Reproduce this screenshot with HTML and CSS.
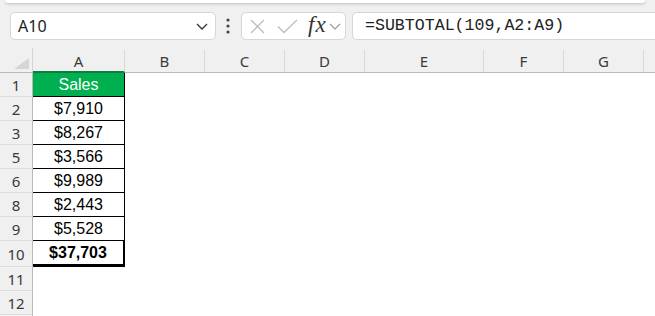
FILE: index.html
```html
<!DOCTYPE html>
<html lang="en">
<head>
    <meta charset="UTF-8">
    <title>SUBTOTAL</title>
    <link rel="stylesheet" href="styles.css">
</head>
<body>

<div class="top">
    <div class="ribbon-edge"></div>
    <div class="formula-bar">
        <div class="name-box">
            <span>A10</span>
            <svg width="12" height="7" viewBox="0 0 12 7"><path d="M1 1 L6 6 L11 1" fill="none" stroke="#333" stroke-width="1.3"/></svg>
        </div>
        <svg class="dots" width="4" height="16" viewBox="0 0 4 16"><circle cx="2" cy="2" r="1.6" fill="#444"/><circle cx="2" cy="8" r="1.6" fill="#444"/><circle cx="2" cy="14" r="1.6" fill="#444"/></svg>
        <div class="fx-group">
            <svg width="15" height="15" viewBox="0 0 15 15"><path d="M1 1 L14 14 M14 1 L1 14" stroke="#bdbdbd" stroke-width="1.3" fill="none"/></svg>
            <svg width="21" height="15" viewBox="0 0 21 15"><path d="M1 7.5 L7 13.5 L20 1" stroke="#bdbdbd" stroke-width="1.3" fill="none"/></svg>
            <span class="fx">fx</span>
            <svg width="12" height="7" viewBox="0 0 12 7"><path d="M1 1 L6 6 L11 1" fill="none" stroke="#999" stroke-width="1.2"/></svg>
        </div>
        <div class="formula-input">=SUBTOTAL(109,A2:A9)</div>
    </div>
</div>

<div class="sheet">
    <div class="col-heads">
        <div class="corner"><span class="tri"></span></div>
        <div class="ch active">A</div>
        <div class="ch">B</div>
        <div class="ch">C</div>
        <div class="ch">D</div>
        <div class="ch">E</div>
        <div class="ch">F</div>
        <div class="ch">G</div>
        <div class="ch last"></div>
    </div>

    <div class="row"><div class="rh">1</div><div class="cell title">Sales</div></div>
    <div class="row"><div class="rh">2</div><div class="cell">$7,910</div></div>
    <div class="row"><div class="rh">3</div><div class="cell">$8,267</div></div>
    <div class="row"><div class="rh">5</div><div class="cell">$3,566</div></div>
    <div class="row"><div class="rh">6</div><div class="cell">$9,989</div></div>
    <div class="row"><div class="rh">8</div><div class="cell">$2,443</div></div>
    <div class="row"><div class="rh">9</div><div class="cell">$5,528</div></div>
    <div class="row total"><div class="rh">10</div><div class="cell">$37,703</div></div>
    <div class="row"><div class="rh">11</div></div>
    <div class="row"><div class="rh">12</div></div>
    <div class="row"><div class="rh"></div></div>
</div>

</body>
</html>
```

FILE: styles.css
```css
body {
    margin: 0;
    width: 655px;
    height: 316px;
    overflow: hidden;
    background: #fff;
    font-family: "Noto Sans", "Open Sans", sans-serif;
}
.top {
    background: #f0f0f0;
    height: 48px;
}
.ribbon-edge {
    height: 3px;
    margin: 0 10px 0 5px;
    background: #fff;
    border-radius: 0 0 6px 6px;
    box-shadow: 0 1px 3px rgba(0, 0, 0, 0.22);
}
.formula-bar {
    display: flex;
    align-items: center;
    padding: 9px 0 0 10px;
}
.name-box {
    width: 206px;
    height: 28px;
    box-sizing: border-box;
    display: flex;
    align-items: center;
    justify-content: space-between;
    padding: 0 7px 0 7px;
    background: #fff;
    border: 1px solid #d6d6d6;
    border-radius: 5px;
    font-size: 16px;
    color: #222;
}
.dots {
    margin: 0 11px 0 10px;
}
.fx-group {
    width: 105px;
    height: 28px;
    box-sizing: border-box;
    display: flex;
    align-items: center;
    padding-left: 8px;
    background: #fff;
    border: 1px solid #d6d6d6;
    border-radius: 5px;
}
.fx-group svg:nth-child(2) {
    margin-left: 12px;
}
.fx {
    margin: -3px 2px 0 10px;
    font-family: "Liberation Serif", serif;
    font-style: italic;
    font-size: 23px;
    letter-spacing: 1px;
    color: #333;
}
.formula-input {
    flex: 1;
    height: 28px;
    box-sizing: border-box;
    margin-left: 6px;
    padding: 3px 0 0 12px;
    background: #fff;
    border: 1px solid #d6d6d6;
    border-right: none;
    border-radius: 5px 0 0 5px;
    font-family: "Liberation Mono", monospace;
    font-size: 16.6px;
    color: #222;
}

.col-heads {
    display: grid;
    grid-template-columns: 33px 92px 80px 80px 80px 119px 80px 80px 1fr;
    height: 25px;
    background: #f0f0f0;
    border-bottom: 1px solid #b9b9b9;
    box-sizing: border-box;
}
.corner {
    position: relative;
    border-right: 1px solid #d4d4d4;
}
.tri {
    position: absolute;
    right: 3px;
    bottom: 3px;
    width: 0;
    height: 0;
    border-left: 15px solid transparent;
    border-bottom: 11px solid #d6d6d6;
}
.ch {
    display: flex;
    align-items: center;
    justify-content: center;
    margin-top: 2px;
    border-right: 1px solid #d8d8d8;
    font-size: 15px;
    color: #3a3a3a;
}
.ch.active {
    border-bottom: 2px solid #107c41;
    margin-bottom: -1px;
}
.ch.last {
    border-right: none;
}

.row {
    display: grid;
    grid-template-columns: 33px 92px;
    height: 24px;
}
.rh {
    display: flex;
    align-items: center;
    justify-content: center;
    background: #f0f0f0;
    border-right: 1px solid #b9b9b9;
    border-bottom: 1px solid #dcdcdc;
    font-size: 15px;
    color: #3a3a3a;
}
.cell {
    display: flex;
    align-items: center;
    justify-content: center;
    border-right: 1px solid #000;
    border-bottom: 1px solid #000;
    font-family: "Liberation Sans", Arial, sans-serif;
    font-size: 16px;
    color: #000;
}
.cell.title {
    background: #00b050;
    color: #fff;
}
.row.total {
    height: 26px;
}
.row.total .cell {
    font-weight: bold;
    border-bottom: 3px solid #000;
    border-right-width: 2px;
}
```
